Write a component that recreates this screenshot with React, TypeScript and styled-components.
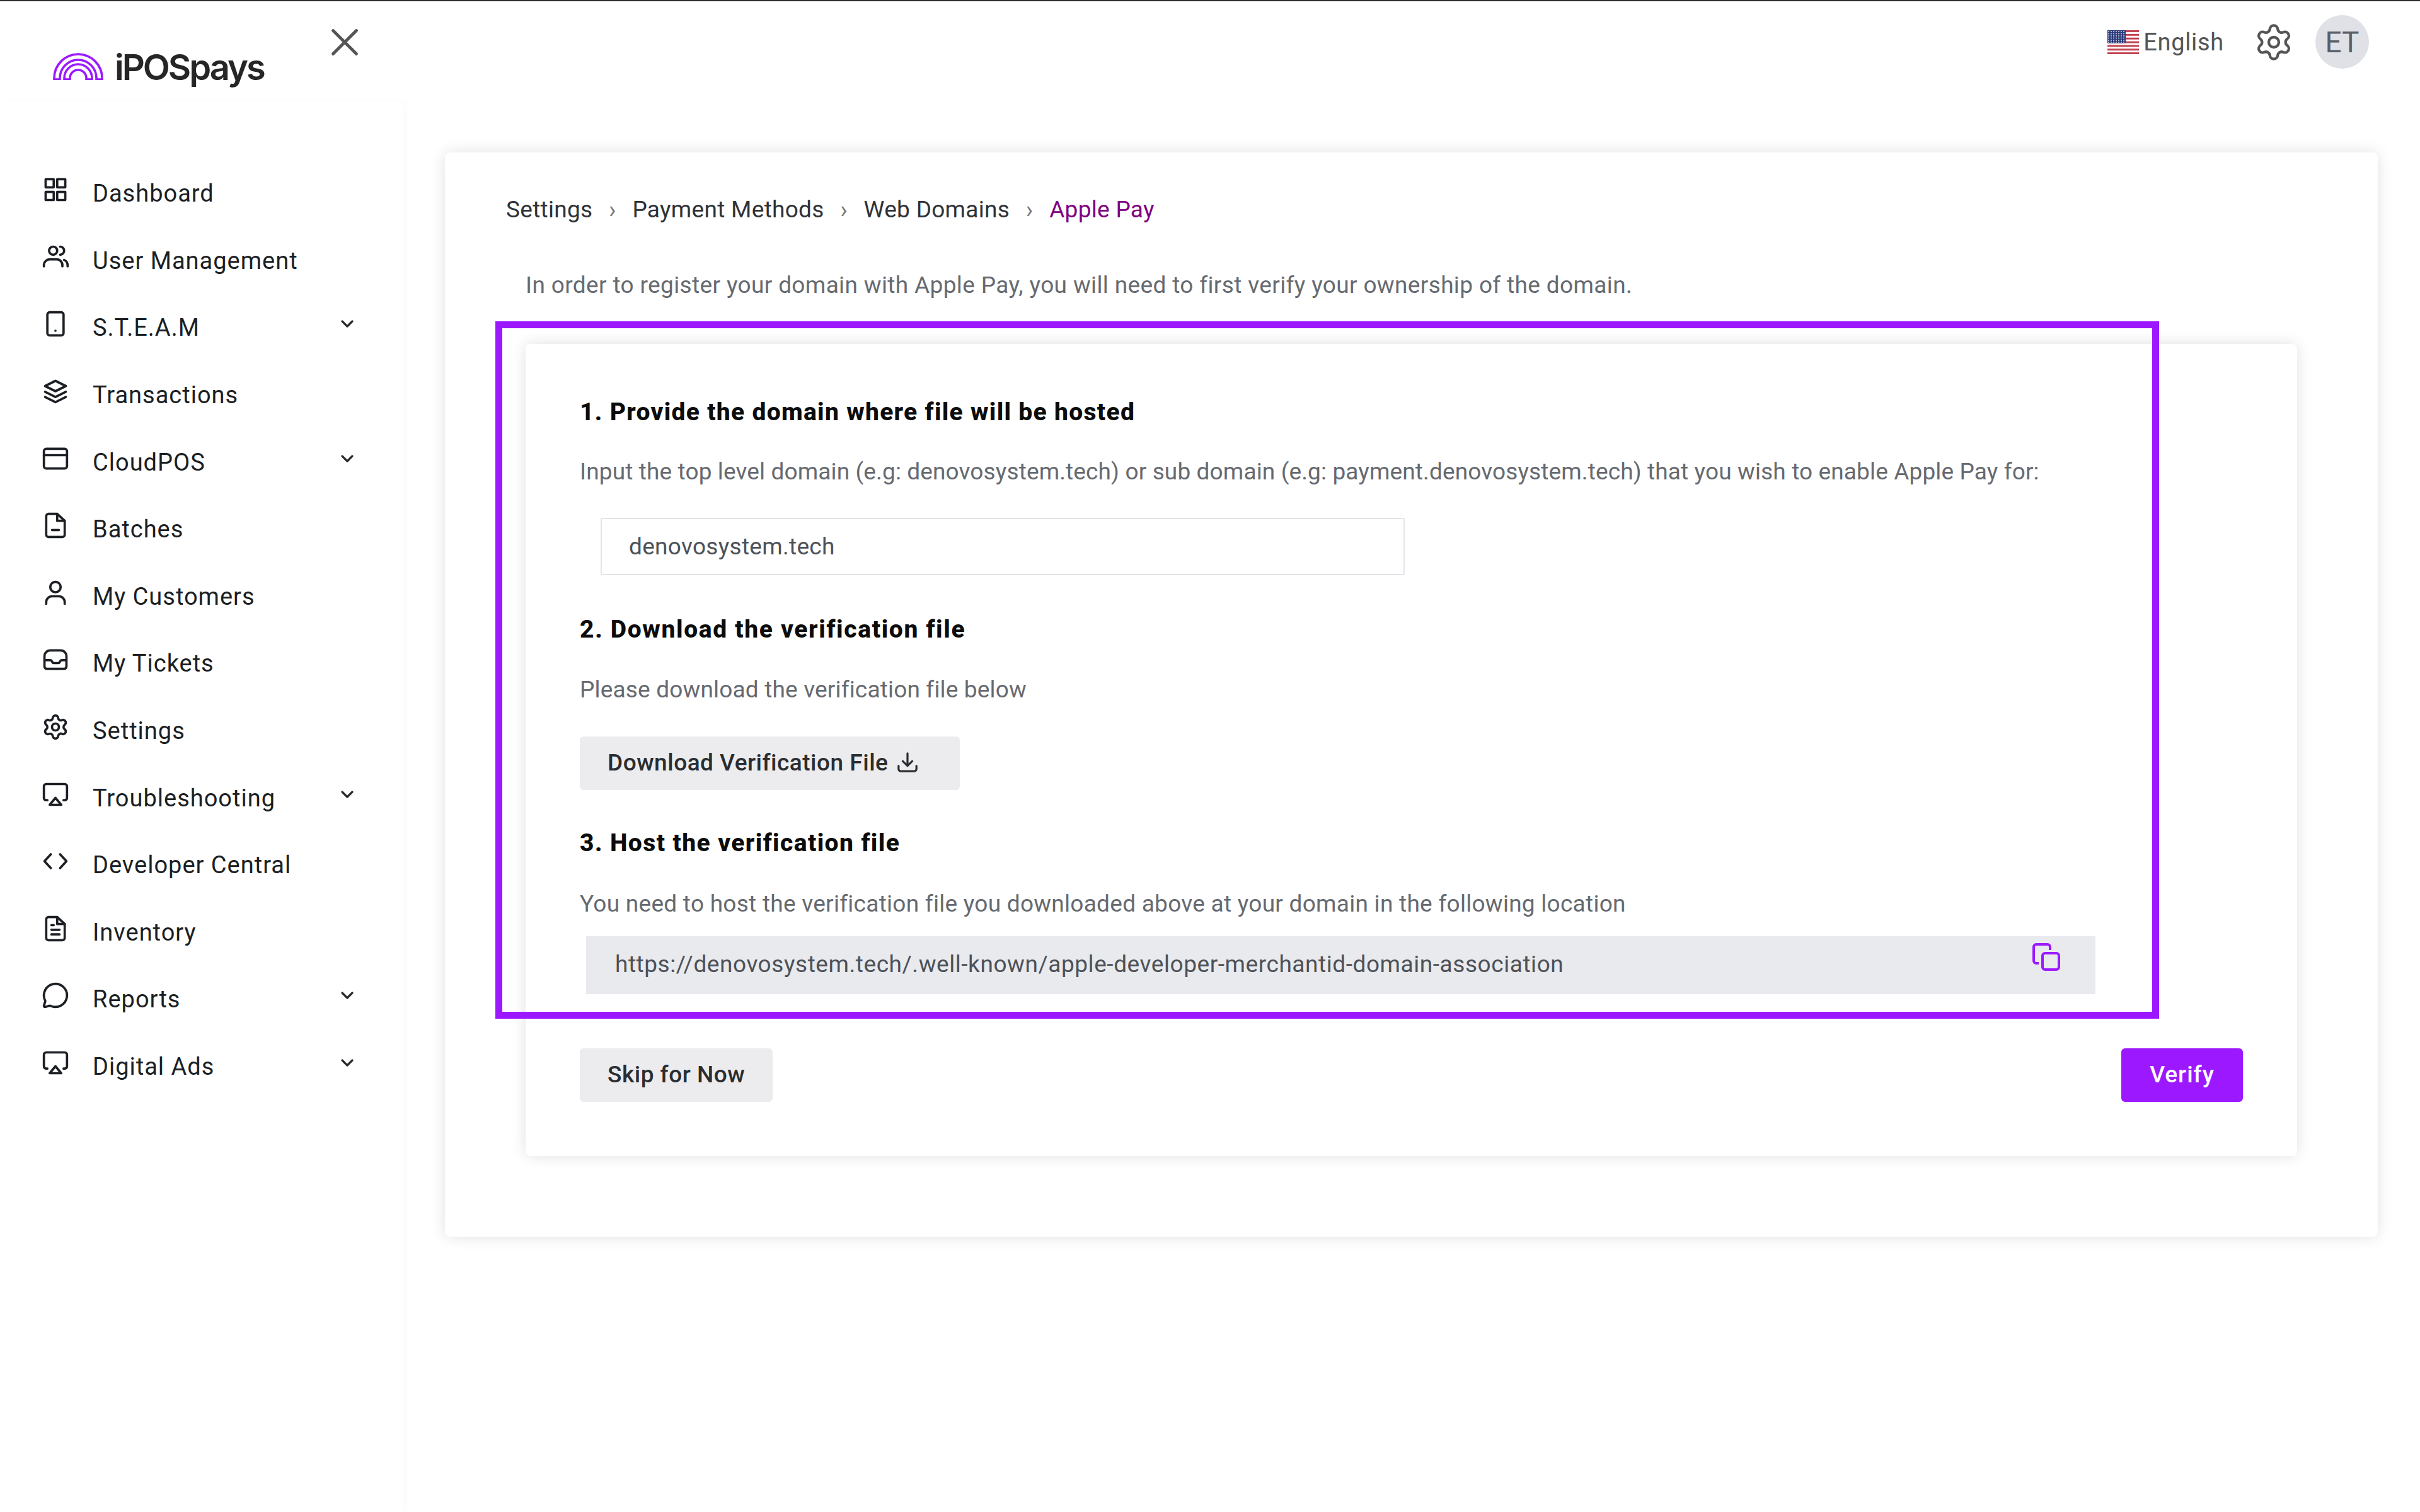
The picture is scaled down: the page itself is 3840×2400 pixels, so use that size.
import React from 'react';
import styled, { createGlobalStyle } from 'styled-components';
import { Airplay, ChevronDown, MessageCircle, Settings, X } from 'lucide-react';

const GlobalStyle = createGlobalStyle`
    html, body {
        margin: 0;
        padding: 0;
        background: #fff;
    }
    body {
        font-family: "Roboto", "Liberation Sans", sans-serif;
        color: #1c1f24;
    }
    * {
        box-sizing: border-box;
    }
`;

const Page = styled.div`
    display: grid;
    grid-template-columns: 640px 1fr;
    width: 3840px;
    height: 2400px;
    border-top: 2px solid #2d2d2d;
    overflow: hidden;
`;

/* sidebar */
const Sidebar = styled.aside`
    display: flex;
    flex-direction: column;
`;

const SidebarHeader = styled.div`
    display: flex;
    justify-content: space-between;
    align-items: flex-start;
    height: 158px;
    padding: 28px 56px 0 83px;
`;

const Logo = styled.div`
    display: flex;
    align-items: flex-end;
    gap: 17px;
    margin-top: 52px;
`;

const LogoMark = styled.svg`
    margin-bottom: 5px;
    fill: none;
    stroke: #9c19ff;
    stroke-width: 3.6;
`;

const LogoText = styled.span`
    font-family: "Inter", sans-serif;
    font-size: 56px;
    font-weight: 600;
    line-height: 50px;
    letter-spacing: -3px;
    color: #262626;
`;

const CloseButton = styled.div`
    display: flex;
    color: #555;
`;

const Nav = styled.nav`
    flex: 1;
    padding-top: 93px;
    box-shadow: 5px 0 10px rgba(0, 0, 0, 0.02);
`;

const NavRow = styled.div`
    display: flex;
    align-items: center;
    height: 106.6px;
    padding: 0 73px 0 66px;
`;

const NavIcon = styled.svg`
    flex: none;
    width: 44px;
    height: 44px;
    margin-bottom: 10px;
    fill: none;
    stroke: #1c1f24;
    stroke-width: 2;
    stroke-linecap: round;
    stroke-linejoin: round;
`;

const NavLabel = styled.span`
    flex: 1;
    margin-left: 37px;
    padding-top: 2px;
    font-size: 38px;
    line-height: 44px;
    letter-spacing: 1px;
    color: #1c1f24;
`;

const NavChevron = styled.div`
    display: flex;
    margin-bottom: 10px;
    color: #2a2a2a;
`;

/* top bar */
const Main = styled.main`
    display: flex;
    flex-direction: column;
    padding: 0 67px 0 66px;
`;

const TopBar = styled.header`
    display: flex;
    justify-content: flex-end;
    align-items: center;
    height: 240px;
    padding: 22px 14px 133px 0;
`;

const Language = styled.div`
    display: flex;
    align-items: center;
    gap: 7px;
    font-size: 38px;
    letter-spacing: 0.7px;
    color: #555;
`;

const GearButton = styled.div`
    display: flex;
    margin-left: 46.5px;
    color: #555;
`;

const Avatar = styled.div`
    display: flex;
    justify-content: center;
    align-items: center;
    width: 85px;
    height: 85px;
    margin-left: 34.5px;
    border-radius: 50%;
    background: #dfe1e6;
    font-size: 46px;
    color: #5a5f66;
`;

/* content */
const OuterCard = styled.section`
    position: relative;
    padding: 69px 128px 128px;
    border-radius: 8px;
    background: #fff;
    box-shadow: 0 0 24px rgba(0, 0, 0, 0.12);
`;

const Breadcrumbs = styled.div`
    display: flex;
    align-items: center;
    margin-left: -31px;
    font-size: 37px;
    line-height: 44px;
    letter-spacing: 0.3px;
    color: #2f3237;
`;

const CrumbSep = styled.span`
    margin: 0 25.6px;
    font-size: 38px;
    color: #777;
`;

const CrumbActive = styled.span`
    color: #800080;
`;

const Intro = styled.p`
    margin: 76px 0 71px;
    font-size: 37px;
    line-height: 44px;
    letter-spacing: 0.36px;
    color: #666a70;
`;

const InnerCard = styled.div`
    display: flex;
    flex-direction: column;
    padding: 86px;
    border-radius: 8px;
    background: #fff;
    box-shadow: 0 0 24px rgba(0, 0, 0, 0.12);
`;

const StepTitle = styled.h2<{ $top?: number; $spacing: number }>`
    margin: ${(p) => p.$top ?? 0}px 0 0;
    font-size: 39px;
    font-weight: 800;
    line-height: 44px;
    letter-spacing: ${(p) => p.$spacing}px;
    color: #0c0c0c;
`;

const StepText = styled.p<{ $top: number; $spacing: number }>`
    margin: ${(p) => p.$top}px 0 0;
    font-size: 37px;
    line-height: 44px;
    letter-spacing: ${(p) => p.$spacing}px;
    color: #666a70;
`;

const DomainInput = styled.div`
    display: flex;
    align-items: center;
    width: 1276px;
    height: 91px;
    margin: 51px 0 0 33px;
    padding-left: 43px;
    border: 2px solid #e3e5ea;
    border-radius: 3px;
    font-size: 37px;
    letter-spacing: 0.3px;
    color: #4d5157;
`;

const GreyButton = styled.div<{ $top?: number; $width: number }>`
    display: inline-flex;
    align-items: center;
    align-self: flex-start;
    gap: 14px;
    width: ${(p) => p.$width}px;
    height: 85px;
    margin-top: ${(p) => p.$top ?? 0}px;
    padding: 0 0 3px 44px;
    border-radius: 6px;
    background: #ececee;
    font-size: 37px;
    font-weight: 500;
    letter-spacing: 0.5px;
    color: #2a2d31;
`;

const UrlBox = styled.div`
    display: flex;
    justify-content: space-between;
    align-items: center;
    width: 2395px;
    height: 92px;
    margin: 29px 0 0 10px;
    padding: 0 56px 4px 46px;
    background: #e9eaee;
    font-size: 37px;
    letter-spacing: 0.56px;
    color: #4d5157;
`;

const CopyIcon = styled.svg`
    width: 44px;
    height: 44px;
    margin-bottom: 22px;
    fill: none;
    stroke: #9c19ff;
    stroke-width: 4;
`;

const Actions = styled.div`
    display: flex;
    justify-content: space-between;
    margin-top: 86px;
`;

const VerifyButton = styled.div`
    display: flex;
    justify-content: center;
    align-items: center;
    width: 193px;
    height: 85px;
    padding-bottom: 3px;
    border-radius: 6px;
    background: #9c19ff;
    font-size: 37px;
    font-weight: 500;
    letter-spacing: 1px;
    color: #fff;
`;

const Highlight = styled.div`
    position: absolute;
    top: 268px;
    left: 80px;
    width: 2640px;
    height: 1107px;
    border: 11px solid #9c19ff;
    pointer-events: none;
`;

const DashboardIcon = () => (
    <NavIcon viewBox="0 0 24 24">
        <rect x="3.5" y="3" width="7" height="7" />
        <rect x="13.5" y="3" width="7" height="7" />
        <rect x="3.5" y="14" width="7" height="7" />
        <rect x="13.5" y="14" width="7" height="7" />
    </NavIcon>
);

const UsersIcon = () => (
    <NavIcon viewBox="0 0 24 24">
        <circle cx="10" cy="6.5" r="3.5" />
        <path d="M2 20v-1.5A5 5 0 0 1 7 14h6a5 5 0 0 1 5 5v1" />
        <path d="M16 3a3.5 3.5 0 0 1 0 7" />
        <path d="M19.5 14.5A5 5 0 0 1 22.5 19v1" />
    </NavIcon>
);

const PhoneIcon = () => (
    <NavIcon viewBox="0 0 24 24">
        <rect x="5" y="2" width="14" height="20" rx="2" />
        <path d="M12 18h.01" />
    </NavIcon>
);

const LayersIcon = () => (
    <NavIcon viewBox="0 0 24 24">
        <path d="M12 3 3 7.5l9 4.5 9-4.5z" />
        <path d="m3 12.5 9 4.5 9-4.5" />
        <path d="m3 17 9 4.5 9-4.5" />
    </NavIcon>
);

const CardIcon = () => (
    <NavIcon viewBox="0 0 24 24">
        <rect x="2" y="3.5" width="20" height="17" rx="2" />
        <path d="M2 9h20" />
    </NavIcon>
);

const FileMinusIcon = () => (
    <NavIcon viewBox="0 0 24 24">
        <path d="M6 2h7.5L20 8v12a2 2 0 0 1-2 2H6a2 2 0 0 1-2-2V4a2 2 0 0 1 2-2z" />
        <path d="M13.5 2v6H20" />
        <path d="M9 16h6" />
    </NavIcon>
);

const CustomerIcon = () => (
    <NavIcon viewBox="0 0 24 24">
        <circle cx="12" cy="7" r="4.5" />
        <path d="M4 21.5v-1.5a5 5 0 0 1 5-5h6a5 5 0 0 1 5 5v1.5" />
    </NavIcon>
);

const InboxIcon = () => (
    <NavIcon viewBox="0 0 24 24">
        <path d="M2.5 18V9a5 5 0 0 1 5-5h9a5 5 0 0 1 5 5v9a2 2 0 0 1-2 2h-15a2 2 0 0 1-2-2z" />
        <path d="M2.5 12.5h5c.6 0 1 .3 1.3.8l.4.7c.3.6.8 1 1.5 1h3.6c.7 0 1.2-.4 1.5-1l.4-.7c.3-.5.7-.8 1.3-.8h4" />
    </NavIcon>
);

const CodeIcon = () => (
    <NavIcon viewBox="0 0 24 24">
        <path d="M8 6 2.5 12 8 18" />
        <path d="M16 6l5.5 6-5.5 6" />
    </NavIcon>
);

const FileTextIcon = () => (
    <NavIcon viewBox="0 0 24 24">
        <path d="M6 2h7.5L20 8v12a2 2 0 0 1-2 2H6a2 2 0 0 1-2-2V4a2 2 0 0 1 2-2z" />
        <path d="M13.5 2v6H20" />
        <path d="M8.5 9h2M8.5 13h7M8.5 17h7" />
    </NavIcon>
);

const GearIcon = () => (
    <NavIcon as={Settings} />
);

const ScreenIcon = () => (
    <NavIcon as={Airplay} />
);

const ChatIcon = () => (
    <NavIcon as={MessageCircle} />
);

const navItems = [
    { label: 'Dashboard', icon: DashboardIcon },
    { label: 'User Management', icon: UsersIcon },
    { label: 'S.T.E.A.M', icon: PhoneIcon, expandable: true },
    { label: 'Transactions', icon: LayersIcon },
    { label: 'CloudPOS', icon: CardIcon, expandable: true },
    { label: 'Batches', icon: FileMinusIcon },
    { label: 'My Customers', icon: CustomerIcon },
    { label: 'My Tickets', icon: InboxIcon },
    { label: 'Settings', icon: GearIcon },
    { label: 'Troubleshooting', icon: ScreenIcon, expandable: true },
    { label: 'Developer Central', icon: CodeIcon },
    { label: 'Inventory', icon: FileTextIcon },
    { label: 'Reports', icon: ChatIcon, expandable: true },
    { label: 'Digital Ads', icon: ScreenIcon, expandable: true },
];

const RainbowLogo = () => (
    <LogoMark width="82" height="44" viewBox="0 0 82 44">
        <path d="M3 43v-2a38 38 0 0 1 76 0v2h-9v-2a29 29 0 0 0-58 0v2z" />
        <path d="M19 43v-2a22 22 0 0 1 44 0v2h-9v-2a13 13 0 0 0-26 0v2z" />
    </LogoMark>
);

const flagStars = [2, 5.5, 9, 12.5, 16, 19].flatMap((y) =>
    [2, 6, 10, 14, 18, 22, 26].map((x) => ({ x, y })),
);

const UsFlag = () => (
    <svg width="50" height="38" viewBox="0 0 50 38">
        <rect width="50" height="38" fill="#fff" />
        {[0, 1, 2, 3, 4, 5, 6].map((i) => (
            <rect key={i} y={i * 5.85} width="50" height="2.92" fill="#c2404f" />
        ))}
        <rect width="29" height="20.5" fill="#2b3a7a" />
        {flagStars.map(({ x, y }) => (
            <circle key={`${x}-${y}`} cx={x} cy={y} r="0.9" fill="#dfe3f0" />
        ))}
    </svg>
);

const App = (): JSX.Element => {
    return (
        <>
            <GlobalStyle />
            <Page>
                <Sidebar>
                    <SidebarHeader>
                        <Logo>
                            <RainbowLogo />
                            <LogoText>iPOSpays</LogoText>
                        </Logo>
                        <CloseButton>
                            <X size={74} strokeWidth={1.6} />
                        </CloseButton>
                    </SidebarHeader>
                    <Nav>
                        {navItems.map(({ label, icon: Icon, expandable }) => (
                            <NavRow key={label}>
                                <Icon />
                                <NavLabel>{label}</NavLabel>
                                {expandable && (
                                    <NavChevron>
                                        <ChevronDown size={32} strokeWidth={2.4} />
                                    </NavChevron>
                                )}
                            </NavRow>
                        ))}
                    </Nav>
                </Sidebar>
                <Main>
                    <TopBar>
                        <Language>
                            <UsFlag />
                            English
                        </Language>
                        <GearButton>
                            <Settings size={64} strokeWidth={1.6} />
                        </GearButton>
                        <Avatar>ET</Avatar>
                    </TopBar>
                    <OuterCard>
                        <Breadcrumbs>
                            <span>Settings</span>
                            <CrumbSep>›</CrumbSep>
                            <span>Payment Methods</span>
                            <CrumbSep>›</CrumbSep>
                            <span>Web Domains</span>
                            <CrumbSep>›</CrumbSep>
                            <CrumbActive>Apple Pay</CrumbActive>
                        </Breadcrumbs>
                        <Intro>In order to register your domain with Apple Pay, you will need to first verify your ownership of the domain.</Intro>
                        <InnerCard>
                            <StepTitle $spacing={1.3}>1. Provide the domain where file will be hosted</StepTitle>
                            <StepText $top={51} $spacing={0.13}>Input the top level domain (e.g: denovosystem.tech) or sub domain (e.g: payment.denovosystem.tech) that you wish to enable Apple Pay for:</StepText>
                            <DomainInput>denovosystem.tech</DomainInput>
                            <StepTitle $top={64} $spacing={1.65}>2. Download the verification file</StepTitle>
                            <StepText $top={52} $spacing={0.17}>Please download the verification file below</StepText>
                            <GreyButton $top={52} $width={603}>
                                Download Verification File
                                <svg width="34" height="34" viewBox="0 0 36 36" fill="none" stroke="#2a2d31" strokeWidth="3.4" strokeLinecap="round" strokeLinejoin="round">
                                    <path d="M18 3v20M10 16l8 8 8-8" />
                                    <path d="M3 24v5a4 4 0 0 0 4 4h22a4 4 0 0 0 4-4v-5" />
                                </svg>
                            </GreyButton>
                            <StepTitle $top={62} $spacing={1.4}>3. Host the verification file</StepTitle>
                            <StepText $top={53} $spacing={0.27}>You need to host the verification file you downloaded above at your domain in the following location</StepText>
                            <UrlBox>
                                https://denovosystem.tech/.well-known/apple-developer-merchantid-domain-association
                                <CopyIcon viewBox="0 0 44 44">
                                    <path d="M10 32H6a4 4 0 0 1-4-4V6a4 4 0 0 1 4-4h18a4 4 0 0 1 4 4v5" />
                                    <rect x="16" y="16" width="26" height="26" rx="4" />
                                </CopyIcon>
                            </UrlBox>
                            <Actions>
                                <GreyButton $width={306}>Skip for Now</GreyButton>
                                <VerifyButton>Verify</VerifyButton>
                            </Actions>
                        </InnerCard>
                        <Highlight />
                    </OuterCard>
                </Main>
            </Page>
        </>
    );
};

export default App;
